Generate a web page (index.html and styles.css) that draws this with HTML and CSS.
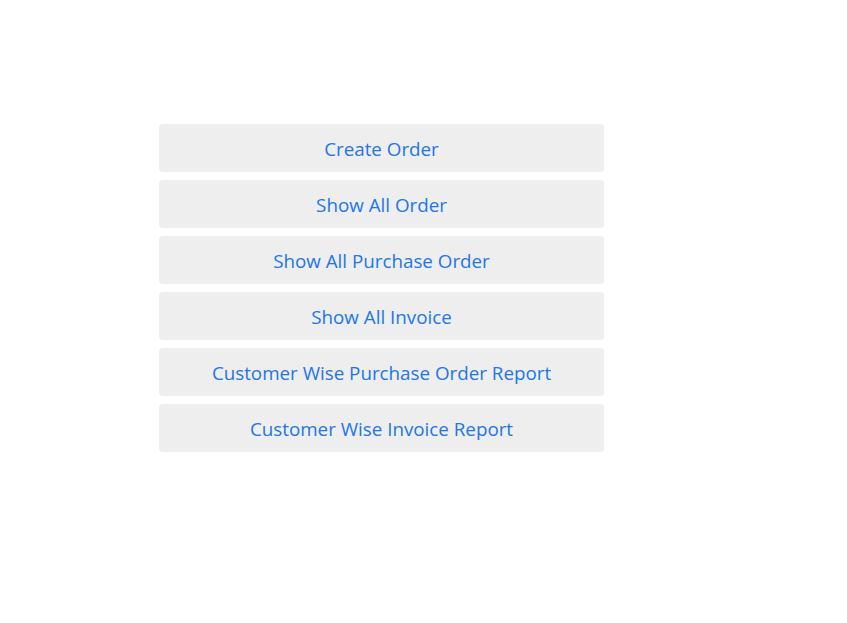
FILE: index.html
```html
<!DOCTYPE html>
<html lang="en">
<head>
<meta charset="utf-8">
<title>Menu</title>
<link rel="stylesheet" href="styles.css">
</head>
<body>
<div class="menu">
  <a class="menu-item" href="#">Create Order</a>
  <a class="menu-item" href="#">Show All Order</a>
  <a class="menu-item" href="#">Show All Purchase Order</a>
  <a class="menu-item" href="#">Show All Invoice</a>
  <a class="menu-item" href="#">Customer Wise Purchase Order Report</a>
  <a class="menu-item" href="#">Customer Wise Invoice Report</a>
</div>
</body>
</html>
```
FILE: styles.css
```css
html, body {
  margin: 0;
  padding: 0;
  background: #ffffff;
}
body {
  font-family: "Open Sans", "Noto Sans", sans-serif;
}
.menu {
  display: flex;
  flex-direction: column;
  gap: 8px;
  width: 445px;
  margin-left: 159px;
  padding-top: 124px;
}
.menu-item {
  display: flex;
  align-items: center;
  justify-content: center;
  box-sizing: border-box;
  height: 48px;
  padding-top: 2px;
  background: #eeeeee;
  border-radius: 4px;
  color: #2176ea;
  text-decoration: none;
  font-size: 18.8px;
}
```
